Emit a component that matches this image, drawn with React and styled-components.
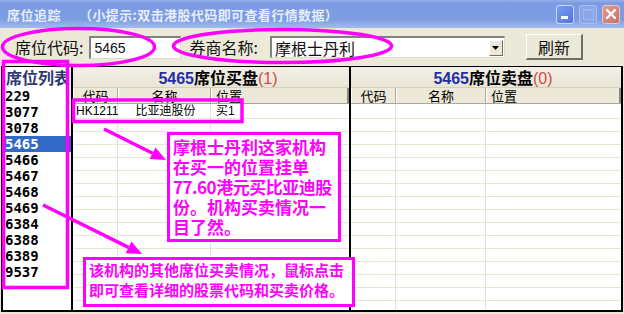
import React from 'react'
import styled, { createGlobalStyle, css } from 'styled-components'

const CJK = '"Noto Sans CJK SC", "Liberation Sans", sans-serif'
const MAGENTA = '#ff00ff'

const seats = ['229', '3077', '3078', '5465', '5466', '5467', '5468', '5469', '6384', '6388', '6389', '9537']
const selectedSeat = '5465'

const buyColumns = '45px 93px 1fr'
const sellColumns = '45px 90px 1fr'

const arrowPoints = (x1, y1, x2, y2, len, half) => {
  const dx = x2 - x1
  const dy = y2 - y1
  const d = Math.hypot(dx, dy)
  const ux = dx / d
  const uy = dy / d
  const bx = x2 - ux * len
  const by = y2 - uy * len
  return {
    base: [bx, by],
    head: `${x2},${y2} ${bx - uy * half},${by + ux * half} ${bx + uy * half},${by - ux * half}`
  }
}

const Arrow = ({ from, to }) => {
  const { base, head } = arrowPoints(from[0], from[1], to[0], to[1], 15, 6.5)
  return (
    <g>
      <line x1={from[0]} y1={from[1]} x2={base[0]} y2={base[1]} stroke={MAGENTA} strokeWidth='3.5' />
      <polygon points={head} fill={MAGENTA} />
    </g>
  )
}

const GlobalStyle = createGlobalStyle`
  html, body {
    margin: 0;
    padding: 0;
    background: #ece9d8;
  }
  body {
    font-family: ${CJK};
  }
`

const App = () => {
  const emptyRows = Array.from({ length: 15 })

  return (
    <>
      <GlobalStyle />
      <Window>
        <TitleBar>
          <TitleText>席位追踪</TitleText>
          <TitleHint>（小提示:双击港股代码即可查看行情数据）</TitleHint>
          <Controls>
            <CtrlButton $kind='min'><MinBar /></CtrlButton>
            <CtrlButton $kind='max'><MaxBox /></CtrlButton>
            <CtrlButton $kind='close'>
              <svg width='12' height='12' viewBox='0 0 12 12'>
                <path d='M2 2 L10 10 M10 2 L2 10' stroke='#fff' strokeWidth='2.4' strokeLinecap='round' />
              </svg>
            </CtrlButton>
          </Controls>
        </TitleBar>

        <Toolbar>
          <Label>席位代码:</Label>
          <TextInput>5465</TextInput>
          <Label $gap={8}>券商名称:</Label>
          <Combo>
            <ComboText>摩根士丹利</ComboText>
            <ComboArrow>
              <svg width='7' height='4' viewBox='0 0 7 4'>
                <path d='M0 0 H7 L3.5 4 Z' fill='#000' />
              </svg>
            </ComboArrow>
          </Combo>
          <Button>刷新</Button>
        </Toolbar>

        <Main>
          <ListPanel>
            <ListHeader>席位列表</ListHeader>
            {seats.map(s => (
              <SeatItem key={s} $selected={s === selectedSeat}>{s}</SeatItem>
            ))}
          </ListPanel>

          <Table $width='278px'>
            <TableTitle>
              <Code>5465</Code>席位买盘<Count>(1)</Count>
            </TableTitle>
            <HeaderRow $cols={buyColumns}>
              <HeaderCell>代码</HeaderCell>
              <HeaderCell>名称</HeaderCell>
              <HeaderCell $last>位置</HeaderCell>
            </HeaderRow>
            <Row $cols={buyColumns} $first>
              <Cell>HK1211</Cell>
              <Cell $center>比亚迪股份</Cell>
              <Cell $last $pad={5}>买1</Cell>
            </Row>
            {emptyRows.map((_, i) => (
              <Row key={i} $cols={buyColumns}>
                <Cell />
                <Cell />
                <Cell $last />
              </Row>
            ))}
          </Table>

          <Table>
            <TableTitle>
              <Code>5465</Code>席位卖盘<Count>(0)</Count>
            </TableTitle>
            <HeaderRow $cols={sellColumns}>
              <HeaderCell>代码</HeaderCell>
              <HeaderCell>名称</HeaderCell>
              <HeaderCell $last>位置</HeaderCell>
            </HeaderRow>
            {[...emptyRows, null].map((_, i) => (
              <Row key={i} $cols={sellColumns} $first={i === 0}>
                <Cell />
                <Cell />
                <Cell $last />
              </Row>
            ))}
          </Table>
        </Main>

        <Annotations width='624' height='314' viewBox='0 0 624 314'>
          <ellipse cx='78.5' cy='47' rx='76' ry='18.5' fill='none' stroke={MAGENTA} strokeWidth='3.5' />
          <ellipse cx='282.5' cy='46' rx='109' ry='16.5' fill='none' stroke={MAGENTA} strokeWidth='3.5' />
          <rect x='3.5' y='61.5' width='64' height='226' fill='none' stroke={MAGENTA} strokeWidth='3.5' />
          <rect x='73.5' y='100' width='168.5' height='21.5' fill='none' stroke={MAGENTA} strokeWidth='3.5' />
          <Arrow from={[104, 129]} to={[166, 160]} />
          <Arrow from={[43, 205]} to={[142, 254]} />
        </Annotations>

        <Callout $x={167} $y={132} $w={174} $h={110} $size={17} $padTop={2}>
          <CalloutLine>摩根士丹利这家机构</CalloutLine>
          <CalloutLine>在买一的位置挂单</CalloutLine>
          <CalloutLine $tight>77.60港元买比亚迪股</CalloutLine>
          <CalloutLine>份。机构买卖情况一</CalloutLine>
          <CalloutLine>目了然。</CalloutLine>
        </Callout>

        <Callout $x={83} $y={257} $w={272} $h={50} $size={15} $padTop={0}>
          <CalloutLine>该机构的其他席位买卖情况，鼠标点击</CalloutLine>
          <CalloutLine>即可查看详细的股票代码和买卖价格。</CalloutLine>
        </Callout>
      </Window>
    </>
  )
}

const Window = styled.div`
  position: relative;
  width: 624px;
  height: 314px;
  overflow: hidden;
  display: flex;
  flex-direction: column;
  background: #ece9d8;
`

const TitleBar = styled.div`
  height: 28px;
  flex: none;
  display: flex;
  align-items: center;
  padding-left: 7px;
  box-sizing: border-box;
  background: linear-gradient(to bottom, #93aeea 0%, #7b9ae2 12%, #7d9de3 70%, #a3bcee 100%);
  color: #e6edfb;
  font-family: ${CJK};
  font-size: 13px;
  font-weight: 700;
  white-space: nowrap;
`

const TitleText = styled.span`
  letter-spacing: 0.5px;
`

const TitleHint = styled.span`
  margin-left: 18px;
  letter-spacing: 0.4px;
`

const Controls = styled.div`
  margin-left: auto;
  margin-right: 4px;
  display: flex;
  gap: 5px;
`

const CtrlButton = styled.div`
  width: 18px;
  height: 19px;
  box-sizing: border-box;
  border-radius: 3px;
  border: 1px solid #c9d6f4;
  display: flex;
  align-items: center;
  justify-content: center;

  ${props =>
    props.$kind === 'min' &&
    css`
      background: linear-gradient(135deg, #7c9cf0, #4f73de);
      align-items: flex-end;
      justify-content: flex-start;
      padding: 0 0 4px 4px;
    `}
  ${props =>
    props.$kind === 'max' &&
    css`
      background: #8aa6e8;
      border-color: #a9bff0;
    `}
  ${props =>
    props.$kind === 'close' &&
    css`
      background: linear-gradient(135deg, #e09a92, #c9706c);
      border-color: #ecc4c0;
    `}
`

const MinBar = styled.div`
  width: 7px;
  height: 3px;
  background: #fff;
`

const MaxBox = styled.div`
  width: 9px;
  height: 8px;
  border: 1px solid #9fb6ee;
  border-top-width: 2px;
`

const Toolbar = styled.div`
  height: 38px;
  flex: none;
  display: flex;
  align-items: center;
  padding-left: 15px;
  box-sizing: border-box;
  font-family: ${CJK};
  font-size: 16px;
  color: #111;
`

const Label = styled.span`
  margin-left: ${props => props.$gap || 0}px;
  white-space: nowrap;
`

const sunken = css`
  box-sizing: border-box;
  background: #fff;
  border-top: 2px solid #808080;
  border-left: 2px solid #808080;
  border-right: 1px solid #e0ddd0;
  border-bottom: 1px solid #e0ddd0;
`

const TextInput = styled.div`
  ${sunken}
  margin-left: 6px;
  margin-top: 1px;
  width: 92px;
  height: 23px;
  padding-left: 3px;
  font-family: "Liberation Sans", sans-serif;
  font-size: 14px;
  line-height: 20px;
`

const Combo = styled.div`
  ${sunken}
  margin-left: 12px;
  width: 235px;
  height: 22px;
  display: flex;
  align-items: center;
  padding: 0 1px 0 3px;
`

const ComboText = styled.span`
  flex: 1;
  font-size: 16px;
  line-height: 18px;
`

const ComboArrow = styled.div`
  width: 14px;
  height: 16px;
  box-sizing: border-box;
  background: #ece9d8;
  border-top: 1px solid #fff;
  border-left: 1px solid #fff;
  border-right: 1px solid #716f64;
  border-bottom: 1px solid #716f64;
  display: flex;
  align-items: center;
  justify-content: center;
`

const Button = styled.div`
  margin-left: 21px;
  width: 57px;
  height: 26px;
  box-sizing: border-box;
  background: #ece9d8;
  border-top: 1px solid #fff;
  border-left: 1px solid #fff;
  border-right: 2px solid #716f64;
  border-bottom: 2px solid #716f64;
  display: flex;
  align-items: center;
  justify-content: center;
  font-size: 16px;
`

const Main = styled.div`
  flex: 1;
  min-height: 0;
  margin: 0 1px 2px 1px;
  border: 2px solid #000;
  border-top-width: 1px;
  display: flex;
  background: #fff;
  overflow: hidden;
`

const ListPanel = styled.div`
  width: 68px;
  flex: none;
  background: #fff;
  display: flex;
  flex-direction: column;
`

const ListHeader = styled.div`
  height: 21px;
  padding-left: 3px;
  font-family: ${CJK};
  font-size: 16px;
  font-weight: 700;
  line-height: 21px;
  color: #2e3870;
  white-space: nowrap;
`

const SeatItem = styled.div`
  height: 16px;
  padding-left: 2px;
  font-family: "DejaVu Sans Mono", monospace;
  font-size: 14px;
  font-weight: 700;
  line-height: 16px;
  color: ${props => (props.$selected ? '#fff' : '#000')};
  background: ${props => (props.$selected ? '#316ac5' : 'transparent')};
`

const Table = styled.div`
  ${props => (props.$width ? css`width: ${props.$width}; flex: none;` : css`flex: 1;`)}
  min-width: 0;
  box-sizing: border-box;
  border-left: 2px solid #000;
  display: flex;
  flex-direction: column;
  background: #fff;
`

const TableTitle = styled.div`
  height: 21px;
  flex: none;
  box-sizing: border-box;
  background: linear-gradient(to bottom, #f2f0e6, #e8e5d5);
  border-bottom: 1px solid #d4d0c0;
  padding-left: 14px;
  text-align: center;
  font-family: ${CJK};
  font-size: 16px;
  font-weight: 700;
  line-height: 20px;
  color: #000;
  white-space: nowrap;
`

const Code = styled.span`
  font-family: "Liberation Sans", sans-serif;
  color: #1f2fa8;
`

const Count = styled.span`
  font-family: "Liberation Sans", sans-serif;
  font-weight: 400;
  color: #d04a4a;
`

const HeaderRow = styled.div`
  display: grid;
  grid-template-columns: ${props => props.$cols};
  height: 15px;
  flex: none;
  background: #ece9d8;
  border-bottom: 1px solid #aca899;
`

const HeaderCell = styled.div`
  box-sizing: border-box;
  border-left: 1px solid #fff;
  border-right: ${props => (props.$last ? '2px solid #8c897c' : '1px solid #aca899')};
  display: flex;
  align-items: center;
  justify-content: ${props => (props.$last ? 'flex-start' : 'center')};
  padding-left: ${props => (props.$last ? 4 : 0)}px;
  font-family: ${CJK};
  font-size: 13px;
  line-height: 13px;
  color: #000;
`

const Row = styled.div`
  display: grid;
  grid-template-columns: ${props => props.$cols};
  height: ${props => (props.$first ? 15 : 13)}px;
  flex: none;
  box-sizing: border-box;
  border-bottom: 1px solid #e6e4d2;
`

const Cell = styled.div`
  box-sizing: border-box;
  border-right: ${props => (props.$last ? 'none' : '1px solid #e6e4d2')};
  padding-left: ${props => props.$pad || 3}px;
  display: flex;
  align-items: center;
  justify-content: ${props => (props.$center ? 'center' : 'flex-start')};
  font-family: "Liberation Sans", ${CJK};
  font-size: 12px;
  line-height: 12px;
  color: #000;
  white-space: nowrap;
`

const Annotations = styled.svg`
  position: absolute;
  left: 0;
  top: 0;
  pointer-events: none;
`

const Callout = styled.div`
  position: absolute;
  left: ${props => props.$x}px;
  top: ${props => props.$y}px;
  width: ${props => props.$w}px;
  height: ${props => props.$h}px;
  box-sizing: border-box;
  border: 3.5px solid ${MAGENTA};
  background: #fff;
  padding: ${props => props.$padTop}px 0 0 3px;
  font-family: ${CJK};
  font-size: ${props => props.$size}px;
  font-weight: 700;
  line-height: 20px;
  color: ${MAGENTA};
`

const CalloutLine = styled.div`
  height: 20px;
  white-space: nowrap;
  letter-spacing: ${props => (props.$tight ? '-0.5px' : '0')};
`

export default App
